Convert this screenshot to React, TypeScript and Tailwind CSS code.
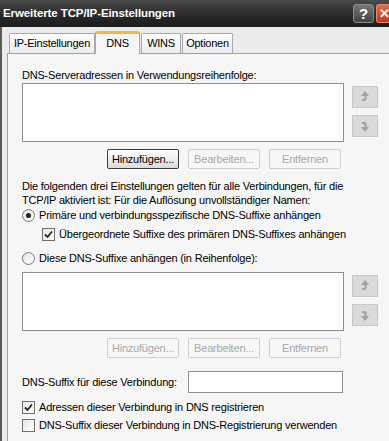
import React from "react";

const font = { fontFamily: '"Liberation Sans", Arial, sans-serif' };

function Btn({ label, enabled }: { label: string; enabled?: boolean }) {
  return (
    <div
      className={
        "w-[72px] h-[20px] flex items-center justify-center rounded-[2px] text-[11px] " +
        (enabled
          ? "border border-[#3c3c3c] bg-gradient-to-b from-[#ffffff] to-[#dcdcdc] text-black"
          : "border border-[#cfcfcf] bg-[#f7f7f7] text-[#a8a8a8]")
      }
    >
      {label}
    </div>
  );
}

function ArrowBtn({ down }: { down?: boolean }) {
  return (
    <div className="w-[26px] h-[22px] flex items-center justify-center border border-[#c8c8c8] bg-[#dadada]">
      <svg width="12" height="14" viewBox="0 0 12 14" style={{ transform: down ? "scaleY(-1)" : undefined }}>
        <path d="M6 1 L10 6 L7.5 6 L7.5 9 Q7.5 11 5 11 L3 11 L3 9 L5 9 Q5.5 9 5.5 8 L5.5 6 L2 6 Z" fill="#a2a2a2" />
      </svg>
    </div>
  );
}

function Check({ checked }: { checked?: boolean }) {
  return (
    <div className="w-[13px] h-[13px] border border-[#6f6f6f] bg-gradient-to-br from-[#e6e6e6] to-[#ffffff] flex items-center justify-center shrink-0">
      {checked && (
        <svg width="9" height="9" viewBox="0 0 9 9">
          <path d="M1 4.5 L3.5 7 L8 1.5" stroke="#222" strokeWidth="1.8" fill="none" />
        </svg>
      )}
    </div>
  );
}

function Radio({ checked }: { checked?: boolean }) {
  return (
    <div className="w-[13px] h-[13px] rounded-full border border-[#7a7a7a] bg-gradient-to-br from-[#e4e4e4] to-[#ffffff] flex items-center justify-center shrink-0">
      {checked && <div className="w-[5px] h-[5px] rounded-full bg-[#222]" />}
    </div>
  );
}

function ListRow() {
  return (
    <div className="flex">
      <div className="w-[322px] h-[59px] border border-[#8f8f8f] bg-white" />
      <div className="ml-[8px] pt-[3px] flex flex-col gap-[7px]">
        <ArrowBtn />
        <ArrowBtn down />
      </div>
    </div>
  );
}

export default function App() {
  return (
    <div className="w-[389px] h-[441px] bg-[#ebebeb] overflow-hidden flex flex-col text-black whitespace-nowrap" style={font}>
      {/* title bar */}
      <div className="h-[27px] shrink-0 flex items-center bg-gradient-to-b from-[#4a4a4a] via-[#2c2c2c] to-[#1c1c1c] pl-[3px]">
        <div className="text-white font-bold text-[11.5px] flex-1 tracking-[-0.1px]">Erweiterte TCP/IP-Einstellungen</div>
        <div className="w-[21px] h-[19px] rounded-[3px] border border-[#8a8a8a] bg-gradient-to-b from-[#777] to-[#444] text-white font-bold text-[15px] flex items-center justify-center leading-none">?</div>
        <div className="ml-[2px] w-[13px] h-[19px] rounded-l-[3px] border border-r-0 border-[#e08a70] bg-gradient-to-b from-[#e86a4a] to-[#c03a1a] text-white font-bold text-[13px] flex items-center pl-[2px] leading-none overflow-hidden">✕</div>
      </div>
      {/* body */}
      <div className="flex-1 flex border-l-2 border-[#5a5a5a]">
        <div className="flex-1 flex flex-col pl-[5px]">
          {/* tabs */}
          <div className="h-[26px] flex items-end pl-[2px] text-[11px] tracking-[-0.25px]">
            <div className="h-[20px] w-[86px] flex items-center justify-center border border-b-0 border-[#a8a8a8] bg-gradient-to-b from-[#ffffff] to-[#ececec] rounded-t-[2px]">IP-Einstellungen</div>
            <div className="h-[23px] w-[45px] flex flex-col border-x border-[#a8a8a8] bg-[#f6f6f6] rounded-t-[2px] -mb-[1px] relative z-10">
              <div className="h-[3px] bg-[#f2b845] rounded-t-[2px]" />
              <div className="flex-1 flex items-start justify-center pt-[1px]">DNS</div>
            </div>
            <div className="h-[20px] w-[40px] ml-[1px] flex items-center justify-center border border-b-0 border-[#a8a8a8] bg-gradient-to-b from-[#ffffff] to-[#ececec] rounded-t-[2px]">WINS</div>
            <div className="h-[20px] w-[51px] ml-[1px] flex items-center justify-center border border-b-0 border-[#a8a8a8] bg-gradient-to-b from-[#ffffff] to-[#ececec] rounded-t-[2px]">Optionen</div>
          </div>
          {/* panel */}
          <div className="flex-1 border-l border-t border-[#a0a0a0] bg-[#f6f6f6] pl-[14px] flex flex-col text-[11px] tracking-[-0.2px]">
            <div className="mt-[14px] h-[14px] leading-[14px]">DNS-Serveradressen in Verwendungsreihenfolge:</div>
            <div className="mt-[1px]">
              <ListRow />
            </div>
            <div className="mt-[7px] ml-[85px] flex gap-[9px]">
              <Btn label="Hinzufügen..." enabled />
              <Btn label="Bearbeiten..." />
              <Btn label="Entfernen" />
            </div>
            <div className="mt-[10px] leading-[14px]">
              <div>Die folgenden drei Einstellungen gelten für alle Verbindungen, für die</div>
              <div>TCP/IP aktiviert ist: Für die Auflösung unvollständiger Namen:</div>
            </div>
            <div className="h-[16px] flex items-center gap-[4px]">
              <Radio checked />
              <span>Primäre und verbindungsspezifische DNS-Suffixe anhängen</span>
            </div>
            <div className="mt-[3px] h-[16px] flex items-center gap-[4px] pl-[20px]">
              <Check checked />
              <span>Übergeordnete Suffixe des primären DNS-Suffixes anhängen</span>
            </div>
            <div className="mt-[8px] h-[16px] flex items-center gap-[4px]">
              <Radio />
              <span>Diese DNS-Suffixe anhängen (in Reihenfolge):</span>
            </div>
            <div className="mt-[6px]">
              <ListRow />
            </div>
            <div className="mt-[7px] ml-[85px] flex gap-[9px]">
              <Btn label="Hinzufügen..." />
              <Btn label="Bearbeiten..." />
              <Btn label="Entfernen" />
            </div>
            <div className="mt-[13px] h-[22px] flex items-center">
              <div className="w-[166px]">DNS-Suffix für diese Verbindung:</div>
              <div className="w-[155px] h-[22px] border border-[#8f8f8f] bg-white" />
            </div>
            <div className="mt-[6px] h-[16px] flex items-center gap-[4px]">
              <Check checked />
              <span>Adressen dieser Verbindung in DNS registrieren</span>
            </div>
            <div className="mt-[2px] h-[16px] flex items-center gap-[4px]">
              <Check />
              <span>DNS-Suffix dieser Verbindung in DNS-Registrierung verwenden</span>
            </div>
          </div>
        </div>
      </div>
    </div>
  );
}
